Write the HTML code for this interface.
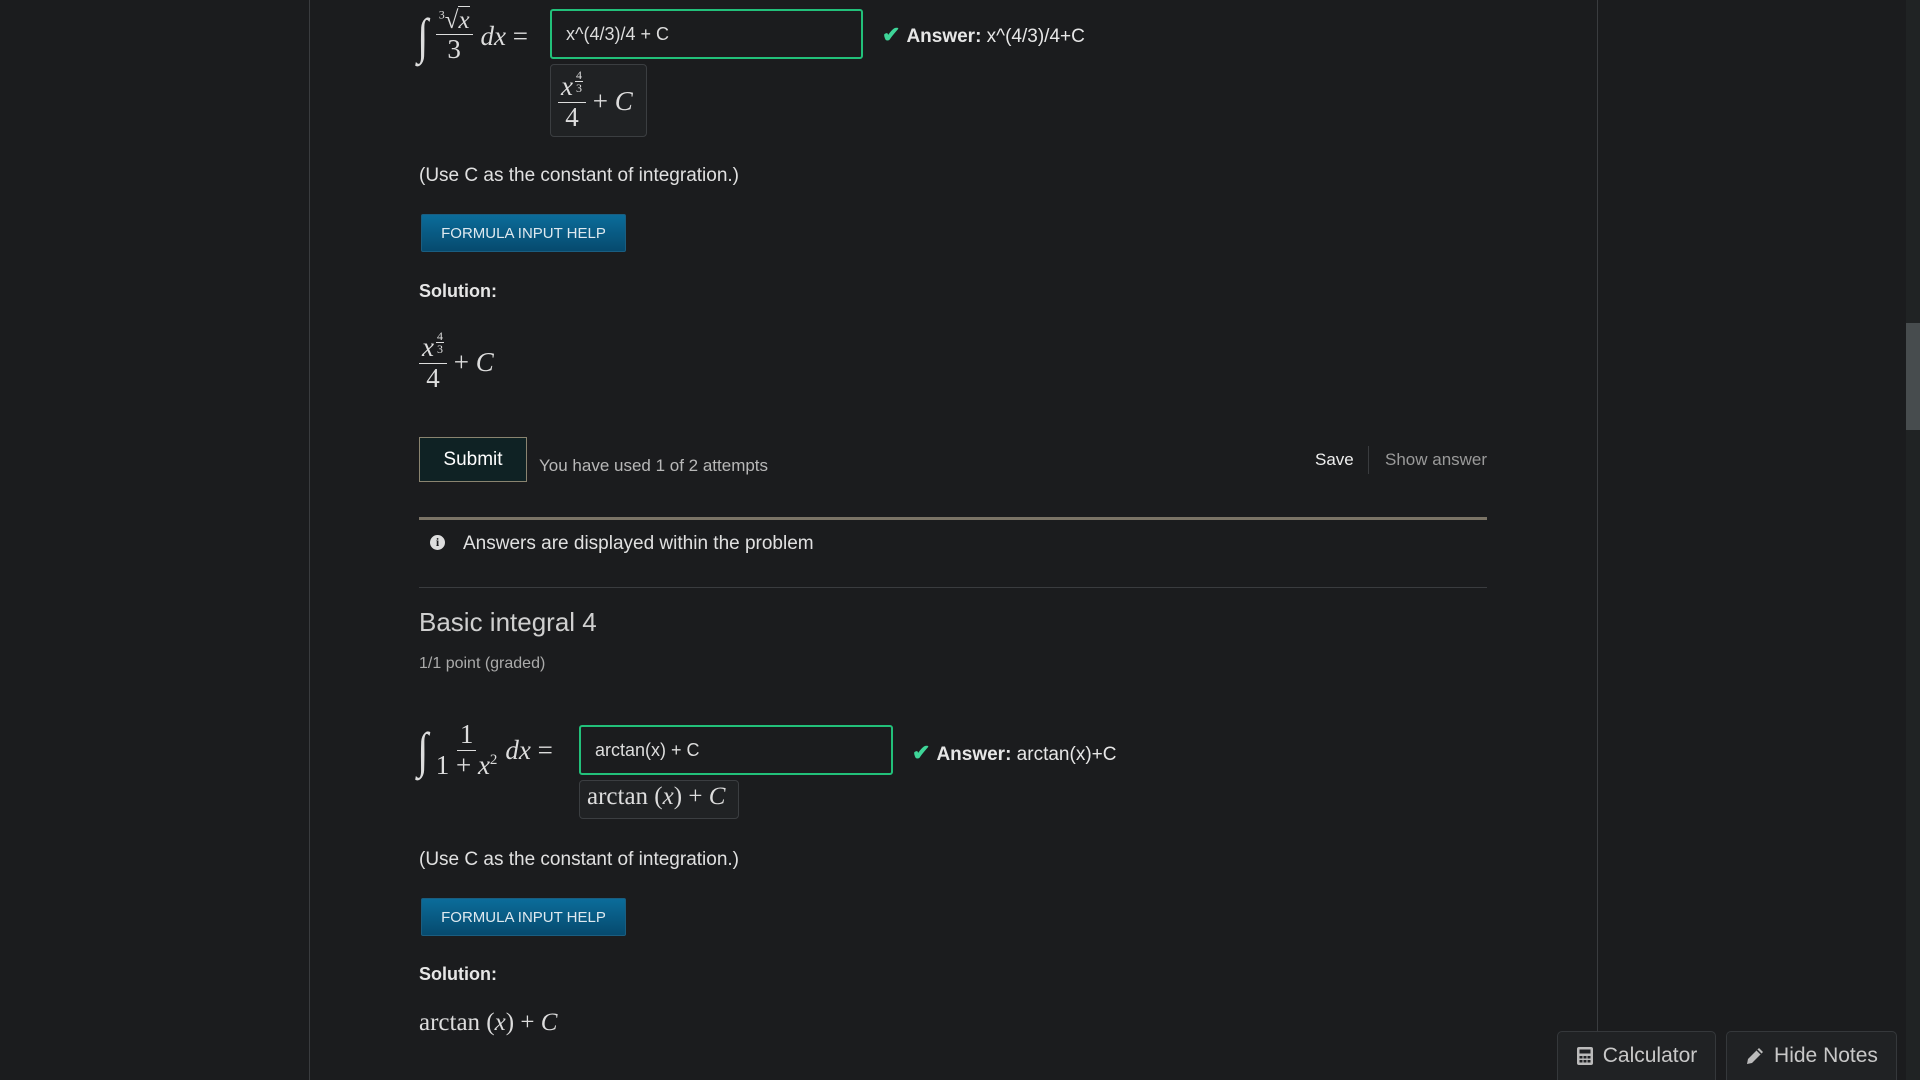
<!DOCTYPE html>
<html><head><meta charset="utf-8"><style>
*{margin:0;padding:0;box-sizing:border-box}
body{width:1920px;height:1080px;background:#1b1c1e;position:relative;overflow:hidden;font-family:"Liberation Sans",sans-serif;color:#e6e6e6}
.a{position:absolute;white-space:nowrap}
.vl{position:absolute;top:0;width:1px;height:1080px;background:#3a3c3f}
.m{font-family:"Liberation Serif",serif}
.i{font-style:italic}
.inp{position:absolute;border:2px solid #22c07a;border-radius:3px;background:#1b1c1e;font-size:18px;color:#ddd;padding-left:14px;display:flex;align-items:center}
.prev{position:absolute;border:1px solid #3b3e41;border-radius:4px;background:#202224}
.ans{font-size:19px;color:#e6e6e6}
.ans b{font-weight:bold}
.chk{color:#3ed598;font-weight:bold;font-size:22px;margin-right:6px}
.btn{position:absolute;width:205px;height:38px;background:linear-gradient(#0b6c9a,#064a6e);border:1px solid #1a5d80;border-radius:2px;color:#dfe9ef;font-size:15px;display:flex;align-items:center;justify-content:center}
.t19{font-size:19px;color:#e0e0e0}
.bold{font-weight:bold;font-size:18px;color:#e6e6e6}
.frac{display:inline-flex;flex-direction:column;align-items:center;vertical-align:middle;line-height:1.1}
.frac .n{border-bottom:1.5px solid #ddd;padding:0 3px}
.sf{display:inline-flex;flex-direction:column;align-items:center;font-size:12px;line-height:1;vertical-align:16px;margin-left:2px}
.sf span:first-child{border-bottom:1px solid #ddd;padding:0 1px}
.tb{position:absolute;border:1px solid #35383b;border-bottom:none;border-radius:5px 5px 0 0;background:#202224;color:#c8c8c8;font-size:21px;display:flex;align-items:center;justify-content:center}
</style></head><body>
<div class="vl" style="left:309px"></div>
<div class="vl" style="left:1597px"></div>
<div class="a" style="left:1906px;top:0;width:14px;height:1080px;background:#202324"></div>
<div class="a" style="left:1906px;top:323px;width:14px;height:107px;background:#474c4e"></div>

<!-- integral 1 -->
<div class="a m" style="left:416px;top:4px;height:64px;display:flex;align-items:center;font-size:27px;color:#ddd">
<span style="font-size:50px;font-style:italic;margin-right:6px;transform:scaleX(0.8)">∫</span>
<span class="frac" style="margin-right:8px"><span class="n" style="font-size:25px"><sup style="font-size:12px">3</sup>√<span class="i" style="border-top:1.5px solid #ddd">x</span></span><span>3</span></span>
<span class="i">dx</span>&nbsp;=
</div>
<div class="inp" style="left:550px;top:9px;width:313px;height:50px">x^(4/3)/4 + C</div>
<div class="a ans" style="left:882px;top:22px"><span class="chk">✔</span><b>Answer:</b> x^(4/3)/4+C</div>
<div class="prev" style="left:550px;top:64px;width:97px;height:73px"></div>
<div class="a m" style="left:558px;top:67px;font-size:27px;color:#ddd;display:flex;align-items:center;height:68px">
<span class="frac"><span class="n"><span class="i">x</span><span class="sf"><span>4</span><span>3</span></span></span><span>4</span></span>&nbsp;+&nbsp;<span class="i">C</span>
</div>

<div class="a t19" style="left:419px;top:165px">(Use C as the constant of integration.)</div>
<div class="btn" style="left:421px;top:214px">FORMULA INPUT HELP</div>
<div class="a bold" style="left:419px;top:281px">Solution:</div>
<div class="a m" style="left:419px;top:328px;font-size:27px;color:#ddd;display:flex;align-items:center;height:68px">
<span class="frac"><span class="n"><span class="i">x</span><span class="sf"><span>4</span><span>3</span></span></span><span>4</span></span>&nbsp;+&nbsp;<span class="i">C</span>
</div>

<div class="a" style="left:419px;top:437px;width:108px;height:45px;border:1px solid #8a8470;background:#0f2224;color:#fff;font-size:19px;display:flex;align-items:center;justify-content:center">Submit</div>
<div class="a" style="left:539px;top:456px;font-size:17px;color:#b8b8b8">You have used 1 of 2 attempts</div>
<div class="a" style="left:1315px;top:450px;font-size:17px;color:#eee">Save</div>
<div class="a" style="left:1368px;top:446px;width:1px;height:28px;background:#3a3c3f"></div>
<div class="a" style="left:1385px;top:450px;font-size:17px;color:#9a9a9a">Show answer</div>

<div class="a" style="left:419px;top:517px;width:1068px;height:3px;background:#7b7466"></div>
<div class="a" style="left:430px;top:535px;width:15px;height:15px;border-radius:50%;background:#ddd;color:#1b1c1e;font-size:12px;font-weight:bold;text-align:center;line-height:15px;font-family:'Liberation Serif',serif">i</div>
<div class="a t19" style="left:463px;top:533px">Answers are displayed within the problem</div>
<div class="a" style="left:419px;top:587px;width:1068px;height:1px;background:#3a3c3f"></div>

<div class="a" style="left:419px;top:607px;font-size:26px;color:#cfcfcf">Basic integral 4</div>
<div class="a" style="left:419px;top:655px;font-size:16px;color:#aaa">1/1 point (graded)</div>

<!-- integral 2 -->
<div class="a m" style="left:416px;top:716px;height:68px;display:flex;align-items:center;font-size:27px;color:#ddd">
<span style="font-size:50px;font-style:italic;margin-right:6px;transform:scaleX(0.8)">∫</span>
<span class="frac" style="margin-right:8px"><span class="n">1</span><span>1 + <span class="i">x</span><sup style="font-size:15px">2</sup></span></span>
<span class="i">dx</span>&nbsp;=
</div>
<div class="inp" style="left:579px;top:725px;width:314px;height:50px">arctan(x) + C</div>
<div class="a ans" style="left:912px;top:740px"><span class="chk">✔</span><b>Answer:</b> arctan(x)+C</div>
<div class="prev" style="left:579px;top:780px;width:160px;height:39px"></div>
<div class="a m" style="left:587px;top:783px;font-size:25px;color:#ddd">arctan (<span class="i">x</span>) + <span class="i">C</span></div>

<div class="a t19" style="left:419px;top:849px">(Use C as the constant of integration.)</div>
<div class="btn" style="left:421px;top:898px">FORMULA INPUT HELP</div>
<div class="a bold" style="left:419px;top:964px">Solution:</div>
<div class="a m" style="left:419px;top:1009px;font-size:25px;color:#ddd">arctan (<span class="i">x</span>) + <span class="i">C</span></div>

<div class="tb" style="left:1557px;top:1031px;width:159px;height:49px">
<svg width="18" height="20" viewBox="0 0 18 20" style="margin-right:9px"><rect x="1" y="1" width="16" height="18" rx="2" fill="#bbb"/><rect x="3.5" y="3.5" width="11" height="4" fill="#202224"/><g fill="#202224"><rect x="3.5" y="10" width="3" height="2.5"/><rect x="7.5" y="10" width="3" height="2.5"/><rect x="11.5" y="10" width="3" height="2.5"/><rect x="3.5" y="14" width="3" height="2.5"/><rect x="7.5" y="14" width="3" height="2.5"/><rect x="11.5" y="14" width="3" height="2.5"/></g></svg>Calculator</div>
<div class="tb" style="left:1726px;top:1031px;width:171px;height:49px">
<svg width="20" height="20" viewBox="0 0 20 20" style="margin-right:9px"><path d="M14 2 L18 6 L7 17 L2 18 L3 13 Z" fill="#bbb"/><path d="M12 4 L16 8" stroke="#202224" stroke-width="1.5"/></svg>Hide Notes</div>
</body></html>
